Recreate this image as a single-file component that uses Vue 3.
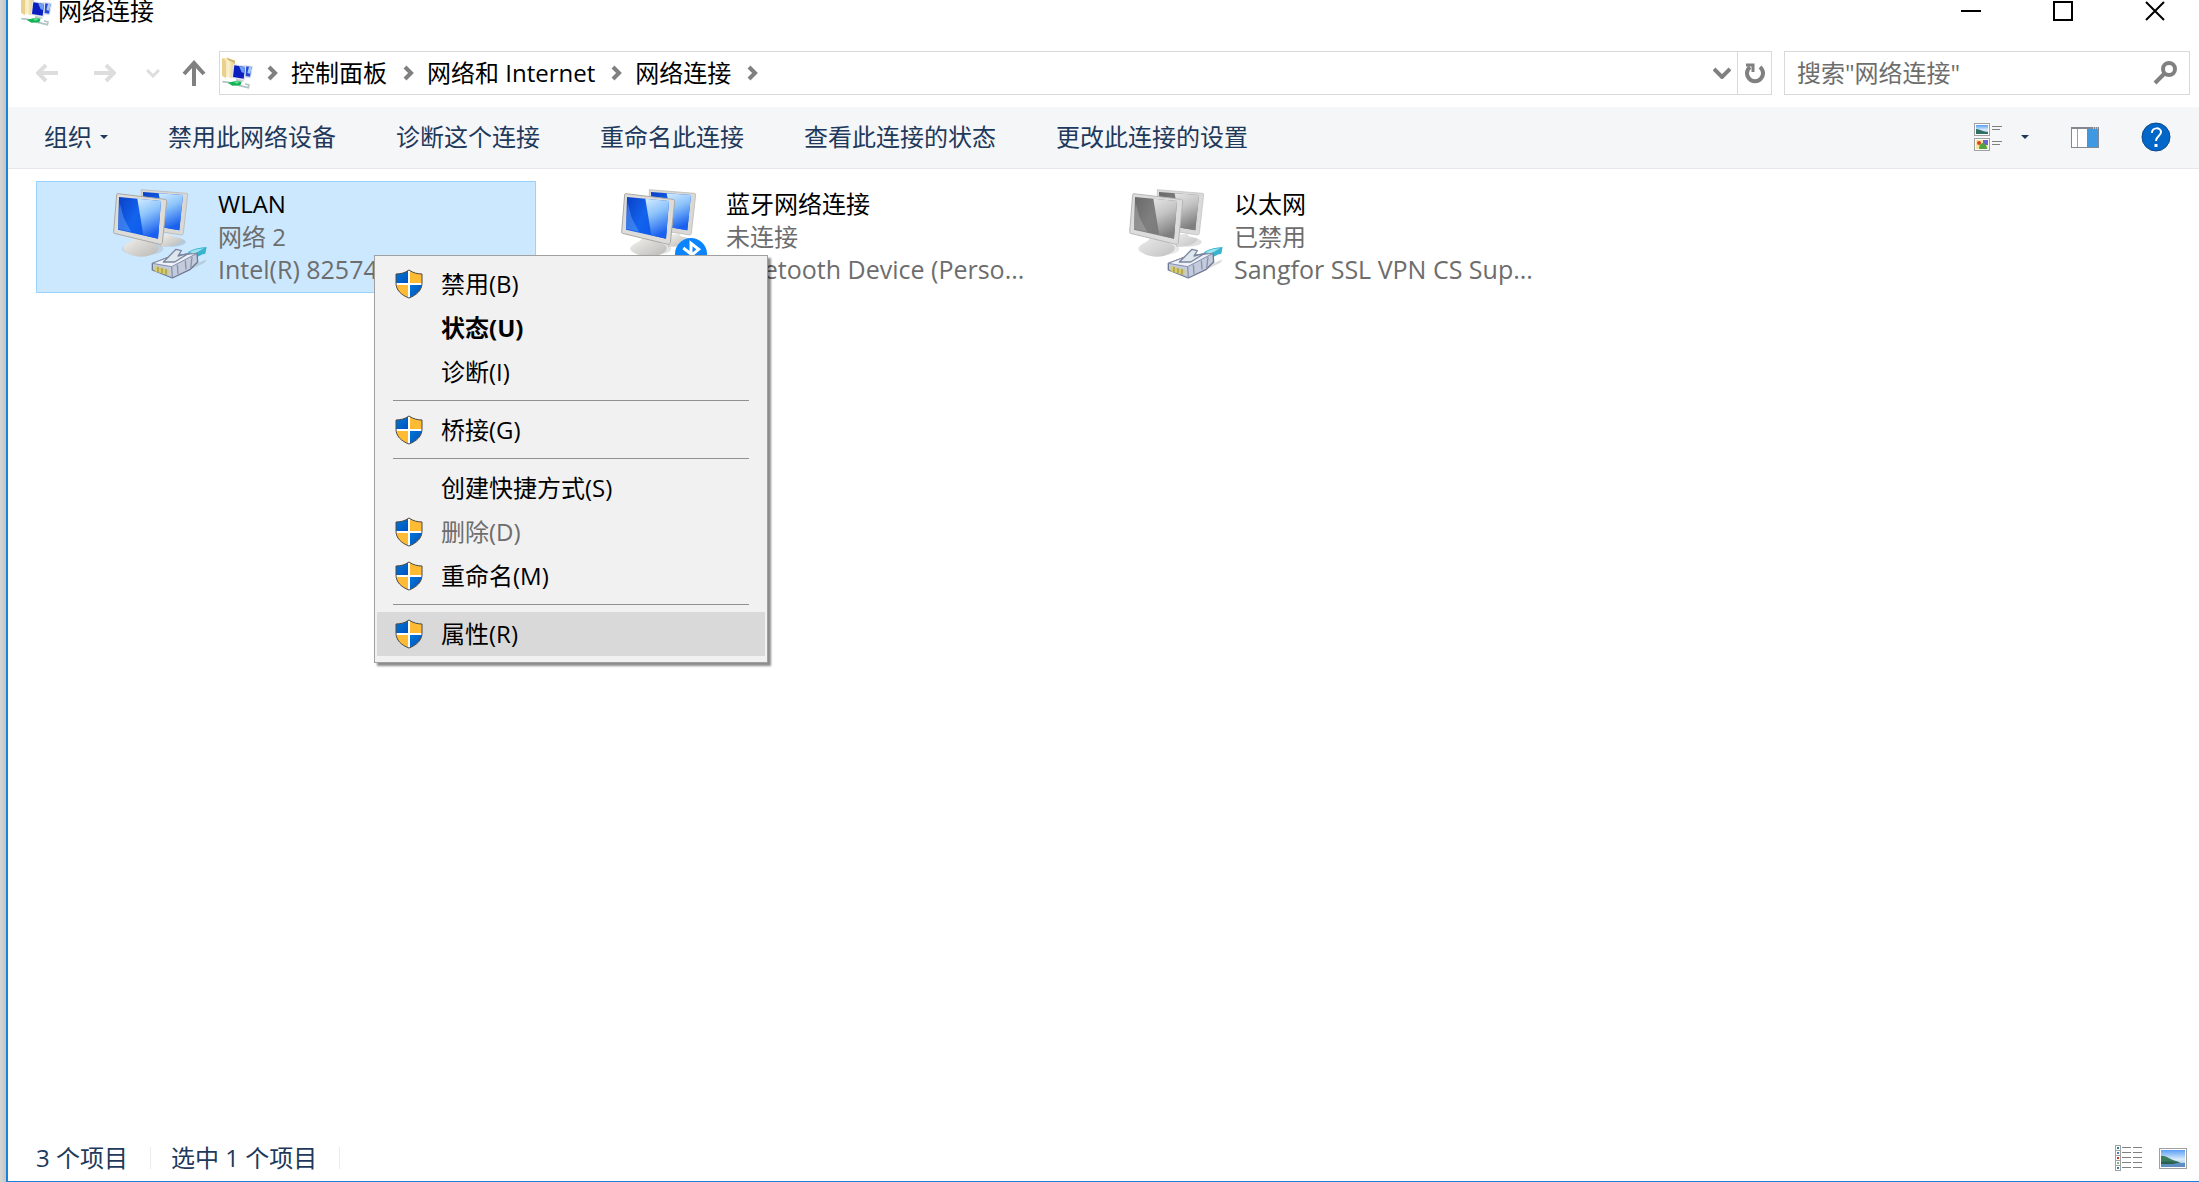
<template>
    <div class="desktop">
        <div class="edge"></div>
        <main class="window">
            <!-- Shared icon shapes -->
            <svg class="sprite" aria-hidden="true">
                <defs>
                    <linearGradient id="screenFront" x1="0" y1="0" x2="1" y2="0.5">
                        <stop offset="0" stop-color="#0a3fc4" />
                        <stop offset="0.5" stop-color="#1263ee" />
                        <stop offset="1" stop-color="#0d55e8" />
                    </linearGradient>
                    <linearGradient id="screenGlow" x1="0" y1="0" x2="0.3" y2="1">
                        <stop offset="0" stop-color="#d4ecff" />
                        <stop offset="0.45" stop-color="#8cc3fb" />
                        <stop offset="1" stop-color="#1a60ee" />
                    </linearGradient>
                    <linearGradient id="metal" x1="0" y1="0" x2="1" y2="1">
                        <stop offset="0" stop-color="#f4f3f0" />
                        <stop offset="1" stop-color="#b9b8b5" />
                    </linearGradient>
                    <linearGradient id="folder" x1="0" y1="0" x2="1" y2="0">
                        <stop offset="0" stop-color="#f0dc9c" />
                        <stop offset="0.5" stop-color="#fbf0cb" />
                        <stop offset="1" stop-color="#e3c981" />
                    </linearGradient>
                    <linearGradient id="sky" x1="0" y1="0" x2="0" y2="1">
                        <stop offset="0" stop-color="#5b9df5" />
                        <stop offset="0.55" stop-color="#d9ecfb" />
                        <stop offset="1" stop-color="#8fbbe0" />
                    </linearGradient>
                    <linearGradient id="shieldBlue" x1="0" y1="0" x2="1" y2="1">
                        <stop offset="0" stop-color="#0078d7" />
                        <stop offset="1" stop-color="#0050bd" />
                    </linearGradient>
                </defs>
                <symbol id="computers" viewBox="33 21 288 276">
                    <ellipse cx="215" cy="186" rx="42" ry="14" fill="#8a9096" opacity="0.35" />
                    <path d="M176 164l38-2c4 14 34 8 30 18-8 14-42 22-64 20z" fill="url(#metal)" />
                    <path d="M124 29l136 11q4 1 3 5l-13 115q-1 5-5 5l-121-19z" fill="#d9d8d4" stroke="#b0afac" stroke-width="2" />
                    <path d="M129 36l120 9-11 106-107-18z" fill="url(#screenFront)" />
                    <path d="M176 40l73 5-11 106-44-8z" fill="url(#screenGlow)" />
                    <ellipse cx="128" cy="206" rx="62" ry="20" fill="#8a9096" opacity="0.25" />
                    <path d="M104 168l48 10c-2 14 22 14 24 24 2 16-26 28-52 28-30 0-54-12-54-27 0-13 32-15 34-35z" fill="url(#metal)" />
                    <path d="M53 41l142 17q6 1 5 7l-13 123q-1 6-7 5L43 160q-3-1-2-5l9-111q0-3 3-3z" fill="#dddcd8" stroke="#aaa9a6" stroke-width="3" />
                    <path d="M57 51l126 12-9 113-120-27z" fill="url(#screenFront)" />
                    <path d="M112 56l71 7-9 113-44-10z" fill="url(#screenGlow)" />
                    <path d="M59 68l12 45 22 42-39-8z" fill="#6ba6f8" opacity="0.45" />
                </symbol>
                <symbol id="plug" viewBox="33 21 288 276">
                    <path d="M218 282l74-32 28-12-6 10-96 46z" fill="#777" opacity="0.25" />
                    <path d="M264 216c18-10 38-14 56-15l-4 20c-12 2-24 8-34 20z" fill="#38b4cf" />
                    <path d="M268 217c14-8 30-11 44-12l-28 16z" fill="#9be2ee" />
                    <path d="M157 250l58-22 76-8 2 26-22 22-54 26-60-24z" fill="#c3cbdc" stroke="#6e7894" stroke-width="4" stroke-linejoin="round" />
                    <path d="M157 250l58-22 76-8-76 40z" fill="#eef1f7" stroke="#848eaa" stroke-width="3" stroke-linejoin="round" />
                    <path d="M215 260l2 32M232 254l2 28M256 242l2 26M276 231l-4 34" stroke="#8993aa" stroke-width="4" />
                    <path d="M190 246l38-38 16 4-10 16 32-8-42 26z" fill="#dfe7ee" stroke="#7a869e" stroke-width="4" stroke-linejoin="round" />
                    <path d="M164 258l42 12-1 16-41-12z" fill="#d9cd62" />
                    <path d="M174 260v16M186 264v16M198 267v17" stroke="#8c8656" stroke-width="3" />
                </symbol>
                <symbol id="bluetooth" viewBox="33 21 288 276">
                    <circle cx="249" cy="222" r="48" fill="#0a84ff" />
                    <path d="M226 204l46 36-23 20v-70l23 18-46 38" fill="none" stroke="#fff" stroke-width="9" />
                </symbol>
                <symbol id="network-folder" viewBox="664 166 96 96">
                    <path d="M667 170l14-2 25 10v48l-12 4-27-10z" fill="url(#folder)" />
                    <path d="M667 170l12 8v52l-12-8z" fill="#e9d08c" />
                    <path d="M681 168l25 9v7l-20-8z" fill="#cfb368" />
                    <path d="M733 190l27 3-6 37-22-2z" fill="#dce3ee" />
                    <path d="M739 194l17 2-5 29-14-2z" fill="#2448d8" />
                    <path d="M748 195l8 1-4 20-9-2z" fill="#a8c8f6" />
                    <path d="M700 187l40 5-4 43-40-6z" fill="#e0e3ea" />
                    <path d="M704 191l32 5-4 35-32-5z" fill="#0b1fc0" />
                    <path d="M718 193l18 3-2 18-8-2z" fill="#6f9df2" />
                    <path d="M710 231l20 4 4 5-26-3z" fill="#c9ccd2" />
                    <path d="M668 240l18 2 34 10 26 6 2-8-12-4" fill="none" stroke="#b2c4c4" stroke-width="5" />
                    <path d="M684 243l28-6 14 3-4 11-24 1z" fill="#12b455" />
                    <path d="M702 240l12-2 6 4-10 4z" fill="#6be095" />
                </symbol>
                <symbol id="shield" viewBox="0 0 28 30">
                    <path d="M14 1C10 4 5 5 1 5v9c0 7 5 12 13 15z" fill="#ffbb33" />
                    <path d="M14 1c4 3 9 4 13 4v9c0 7-5 12-13 15z" fill="#ffbb33" />
                    <path d="M14 1C10 4 5 5 1 5v10h13z" fill="url(#shieldBlue)" />
                    <path d="M14 15h13c-1 7-6 11-13 14z" fill="url(#shieldBlue)" />
                    <path d="M14 1v28M1 15h26" stroke="#fff" stroke-width="2" />
                    <path d="M14 1C10 4 5 5 1 5v9c0 7 5 12 13 15 8-3 13-8 13-15V5c-4 0-9-1-13-4z" fill="none" stroke="#4a4a4a" stroke-width="1" />
                </symbol>
                <symbol id="chevron" viewBox="0 0 12 16">
                    <path d="M2 2l6 6-6 6" fill="none" stroke="#808080" stroke-width="4" />
                </symbol>
            </svg>

            <header class="title-bar">
                <svg class="title-icon"><use href="#network-folder" /></svg>
                <h1>网络连接</h1>
                <div class="caption-buttons">
                    <button aria-label="最小化">
                        <svg width="20" height="20"><path d="M0 10h20" stroke="#000" stroke-width="2" /></svg>
                    </button>
                    <button aria-label="最大化">
                        <svg width="20" height="20"><rect x="1" y="1" width="18" height="18" fill="none" stroke="#000" stroke-width="2" /></svg>
                    </button>
                    <button aria-label="关闭">
                        <svg width="20" height="20"><path d="M1 1l18 18M19 1L1 19" stroke="#000" stroke-width="2" /></svg>
                    </button>
                </div>
            </header>

            <nav class="nav-bar">
                <button class="nav-arrow" aria-label="后退" disabled>
                    <svg width="22" height="18"><path d="M10 1L2 9l8 8M2 9h20" fill="none" stroke="#ddd" stroke-width="4" /></svg>
                </button>
                <button class="nav-arrow" aria-label="前进" disabled>
                    <svg width="22" height="18"><path d="M12 1l8 8-8 8M20 9H0" fill="none" stroke="#ddd" stroke-width="4" /></svg>
                </button>
                <button class="nav-recent" aria-label="最近位置" disabled>
                    <svg width="14" height="10"><path d="M1 2l6 6 6-6" fill="none" stroke="#ddd" stroke-width="3" /></svg>
                </button>
                <button class="nav-up" aria-label="向上">
                    <svg width="24" height="26"><path d="M12 26V3M2 14L12 3l10 11" fill="none" stroke="#808080" stroke-width="4" /></svg>
                </button>
                <div class="address">
                    <svg class="address-icon"><use href="#network-folder" /></svg>
                    <svg class="crumb-sep"><use href="#chevron" /></svg>
                    <template v-for="crumb in crumbs" :key="crumb">
                        <a href="#">{{ crumb }}</a>
                        <svg class="crumb-sep"><use href="#chevron" /></svg>
                    </template>
                    <button class="address-drop" aria-label="上一个位置">
                        <svg width="18" height="12"><path d="M1 2l8 8 8-8" fill="none" stroke="#808080" stroke-width="4" /></svg>
                    </button>
                    <button class="refresh" aria-label="刷新">
                        <svg width="20" height="22">
                            <path d="M15 5a8 8 0 1 1-10 0" fill="none" stroke="#808080" stroke-width="4" />
                            <path d="M1 3h7v7" fill="none" stroke="#808080" stroke-width="3" />
                        </svg>
                    </button>
                </div>
                <div class="search">
                    <input v-model="query" type="text" aria-label="搜索" placeholder="搜索&quot;网络连接&quot;" />
                    <svg width="24" height="24">
                        <circle cx="16" cy="8" r="6" fill="none" stroke="#808080" stroke-width="4" />
                        <path d="M12 12L2 22" stroke="#808080" stroke-width="4" />
                    </svg>
                </div>
            </nav>

            <div class="toolbar">
                <button class="organize">
                    组织
                    <svg width="8" height="4"><path d="M0 0h8L4 4z" fill="#1e395b" /></svg>
                </button>
                <button v-for="command in commands" :key="command">{{ command }}</button>
                <div class="view-tools">
                    <button class="view-mode" aria-label="更改视图">
                        <svg width="28" height="28">
                            <g stroke="#a0a0a0" fill="#fff">
                                <rect x="0.5" y="0.5" width="15" height="12" />
                                <rect x="0.5" y="15.5" width="15" height="12" />
                            </g>
                            <rect x="2" y="2" width="12" height="9" fill="url(#sky)" />
                            <path d="M2 6c4 0 7 3 12 3v2H2z" fill="#2f6f62" />
                            <rect x="2" y="17" width="12" height="9" fill="#f5e6a8" />
                            <circle cx="5" cy="20" r="2" fill="#e0401c" />
                            <path d="M9 17h5v5H9z" fill="#6b64d8" />
                            <path d="M5 26c0-4 2-6 4-6s4 3 4 6z" fill="#55a33c" />
                            <path d="M18 3.5h10M18 6.5h8M18 18.5h10M18 21.5h8" stroke="#808080" />
                        </svg>
                        <svg width="8" height="4"><path d="M0 0h8L4 4z" fill="#1e395b" /></svg>
                    </button>
                    <button aria-label="预览窗格">
                        <svg width="28" height="21">
                            <rect x="0.5" y="0.5" width="27" height="20" fill="#fff" stroke="#828790" />
                            <path d="M0 1h28" stroke="#828790" stroke-width="2" />
                            <path d="M6.5 2v18" stroke="#a0a0a0" />
                            <rect x="16" y="2" width="11" height="18" fill="#3e98e2" />
                            <path d="M22 1h1M24 1h1M26 1h1" stroke="#fff" />
                        </svg>
                    </button>
                    <button aria-label="帮助">
                        <svg width="30" height="30">
                            <circle cx="15" cy="15" r="14" fill="#0067c8" stroke="#0b4a8f" />
                            <path d="M11 11c0-6 9-6 9-1 0 4-5 4-5 9" fill="none" stroke="#fff" stroke-width="2" />
                            <path d="M15 22v3" stroke="#fff" stroke-width="3" />
                        </svg>
                    </button>
                </div>
            </div>

            <section class="connections">
                <div
                    v-for="item in connections"
                    :key="item.name"
                    class="connection"
                    :class="{ selected: item.selected, disabled: item.disabled }"
                >
                    <svg class="connection-icon">
                        <use class="screens" href="#computers" />
                        <use :href="item.badge" />
                    </svg>
                    <div class="connection-text">
                        <p class="name">{{ item.name }}</p>
                        <p>{{ item.status }}</p>
                        <p class="device">{{ item.device }}</p>
                    </div>
                </div>
            </section>

            <footer class="status-bar">
                <span class="status">3 个项目</span>
                <span class="status">选中 1 个项目</span>
                <div class="layout-buttons">
                    <button aria-label="详细信息">
                        <svg width="28" height="26">
                            <g v-for="(color, i) in listColors" :key="i">
                                <rect x="0.5" :y="i * 5 + 0.5" width="5" height="5" fill="#fff" stroke="#a0a0a0" />
                                <rect x="2" :y="i * 5 + 2" width="2" height="2" :fill="color" />
                                <path :d="`M7 ${i * 5 + 2.5}h9M18 ${i * 5 + 2.5}h9`" stroke="#808080" />
                            </g>
                        </svg>
                    </button>
                    <button aria-label="大图标">
                        <svg width="28" height="21">
                            <rect x="0.5" y="0.5" width="27" height="20" fill="#fff" stroke="#a0a0a0" />
                            <rect x="2" y="2" width="24" height="17" fill="url(#sky)" />
                            <path d="M2 8c5-1 9 4 18 6v2H2z" fill="#3a7d5e" />
                            <path d="M2 15h24v4H2z" fill="#5c8fc0" />
                            <path d="M2 14c8-1 12 0 20 0l-8 2H2z" fill="#2d5f50" />
                        </svg>
                    </button>
                </div>
            </footer>

            <ul class="context-menu">
                <li v-for="(entry, i) in menu" :key="i">
                    <hr v-if="entry.separator" />
                    <button
                        v-else
                        :disabled="entry.disabled"
                        :class="{ bold: entry.bold, active: entry.active }"
                    >
                        <svg class="shield"><use v-if="entry.shield" href="#shield" /></svg>
                        {{ entry.label }}
                    </button>
                </li>
            </ul>
        </main>
    </div>
</template>

<script setup>
import { ref } from 'vue';

const query = ref('');

const crumbs = ['控制面板', '网络和 Internet', '网络连接'];

const commands = ['禁用此网络设备', '诊断这个连接', '重命名此连接', '查看此连接的状态', '更改此连接的设置'];

const connections = ref([
    { name: 'WLAN', status: '网络 2', device: 'Intel(R) 82574L Gigabit...', badge: '#plug', selected: true },
    { name: '蓝牙网络连接', status: '未连接', device: 'Bluetooth Device (Perso...', badge: '#bluetooth' },
    { name: '以太网', status: '已禁用', device: 'Sangfor SSL VPN CS Sup...', badge: '#plug', disabled: true },
]);

const menu = [
    { label: '禁用(B)', shield: true },
    { label: '状态(U)', bold: true },
    { label: '诊断(I)' },
    { separator: true },
    { label: '桥接(G)', shield: true },
    { separator: true },
    { label: '创建快捷方式(S)' },
    { label: '删除(D)', shield: true, disabled: true },
    { label: '重命名(M)', shield: true },
    { separator: true },
    { label: '属性(R)', shield: true, active: true },
];

const listColors = ['#2b7fa8', '#4a7fb0', '#c8321e', '#7fb58a', '#2b7fa8'];
</script>

<style>
body {
    margin: 0;
}
</style>

<style scoped>
.desktop {
    display: flex;
    min-height: 100vh;
    background: #fff;
    color: #000;
    font-family: "Open Sans", "Noto Sans CJK SC", sans-serif;
    font-size: 24px;
    line-height: 32px;
}

.edge {
    width: 6px;
    background: linear-gradient(to right, #d6d6d6, #c4c4c4);
}

.window {
    position: relative;
    flex: 1;
    display: flex;
    flex-direction: column;
    min-width: 0;
    border-left: 2px solid #1a82d8;
    border-bottom: 1px solid #1a82d8;
}

.sprite {
    position: absolute;
    width: 0;
    height: 0;
}

svg {
    display: block;
    flex: none;
}

button {
    display: flex;
    align-items: center;
    justify-content: center;
    padding: 0;
    border: none;
    background: none;
    color: inherit;
    font: inherit;
    white-space: nowrap;
}

.title-bar {
    display: flex;
    align-items: flex-end;
    height: 26px;
    padding-left: 12px;
    overflow: hidden;
}

.title-icon {
    width: 32px;
    height: 32px;
}

h1 {
    margin: 0 0 0 6px;
    font-size: 24px;
    font-weight: 400;
    line-height: 30px;
}

.caption-buttons {
    display: flex;
    gap: 72px;
    margin-left: auto;
    padding: 0 34px 5px 0;
}

.nav-bar {
    display: flex;
    height: 44px;
    padding: 25px 9px 12px 10px;
}

.nav-arrow {
    width: 58px;
}

.nav-recent {
    width: 38px;
}

.nav-up {
    width: 44px;
}

.address {
    display: flex;
    align-items: center;
    flex: 1;
    margin: 0 12px 0 3px;
    border: 1px solid #d9d9d9;
}

.address a {
    color: #000;
    text-decoration: none;
    white-space: nowrap;
}

.address-icon {
    width: 32px;
    height: 32px;
    margin-left: 1px;
}

.crumb-sep {
    width: 12px;
    height: 16px;
    margin: 0 12px 0 14px;
}

.address a + .crumb-sep {
    margin-left: 16px;
}

.address-drop {
    width: 30px;
    margin-left: auto;
}

.refresh {
    align-self: stretch;
    width: 34px;
    border-left: 1px solid #d9d9d9;
}

.search {
    display: flex;
    align-items: center;
    box-sizing: border-box;
    width: 406px;
    padding: 0 12px;
    border: 1px solid #d9d9d9;
}

.search input {
    flex: 1;
    min-width: 0;
    padding: 0;
    border: none;
    outline: none;
    font: inherit;
}

.search input::placeholder {
    color: #6d6d6d;
    opacity: 1;
}

.toolbar {
    display: flex;
    align-items: center;
    gap: 60px;
    height: 60px;
    padding: 0 28px 1px 36px;
    border-bottom: 1px solid #e4e8ec;
    background: #f5f6f7;
    color: #1e395b;
}

.organize {
    gap: 8px;
}

.view-tools {
    display: flex;
    align-items: center;
    gap: 42px;
    margin-left: auto;
}

.view-mode {
    gap: 19px;
}

.connections {
    display: flex;
    flex: 1;
    align-items: flex-start;
    gap: 8px;
    padding: 12px 28px;
}

.connection {
    display: flex;
    gap: 11px;
    box-sizing: border-box;
    width: 500px;
    height: 112px;
    padding: 5px 0 0 74px;
    border: 1px solid transparent;
}

.connection.selected {
    border-color: #99d1ff;
    background: #cce8ff;
}

.connection-icon {
    width: 96px;
    height: 92px;
}

.connection.disabled .screens {
    filter: grayscale(1) contrast(0.6) brightness(1.2);
}

.connection-text p {
    margin: 0;
    color: #6d6d6d;
    line-height: 33px;
    white-space: nowrap;
}

.connection-text .name {
    color: #000;
}

.connection-text .device {
    font-size: 25px;
}

.status-bar {
    display: flex;
    align-items: center;
    height: 46px;
    padding: 0 12px 0 28px;
    color: #1e395b;
}

.status {
    display: flex;
    align-items: center;
    margin-right: 20px;
}

.status::after {
    content: "";
    width: 1px;
    height: 22px;
    margin-left: 22px;
    background: #ececec;
}

.layout-buttons {
    display: flex;
    align-items: center;
    gap: 16px;
    margin-left: auto;
}

.context-menu {
    position: absolute;
    top: 255px;
    left: 366px;
    box-sizing: border-box;
    width: 394px;
    margin: 0;
    padding: 6px 2px;
    border: 1px solid #a0a0a0;
    background: #f1f1f1;
    box-shadow: 3px 3px 2px rgba(0, 0, 0, 0.45);
    list-style: none;
}

.context-menu button {
    justify-content: flex-start;
    gap: 18px;
    width: 100%;
    height: 44px;
    padding-left: 18px;
}

.context-menu button.active {
    background: #d9d9d9;
}

.context-menu button.bold {
    font-weight: 700;
}

.context-menu button:disabled {
    color: #6d6d6d;
}

.context-menu hr {
    height: 1px;
    margin: 0 16px;
    border: none;
    background: #919191;
    background-clip: content-box;
    padding: 6px 0 7px;
}

.shield {
    width: 28px;
    height: 30px;
}
</style>
